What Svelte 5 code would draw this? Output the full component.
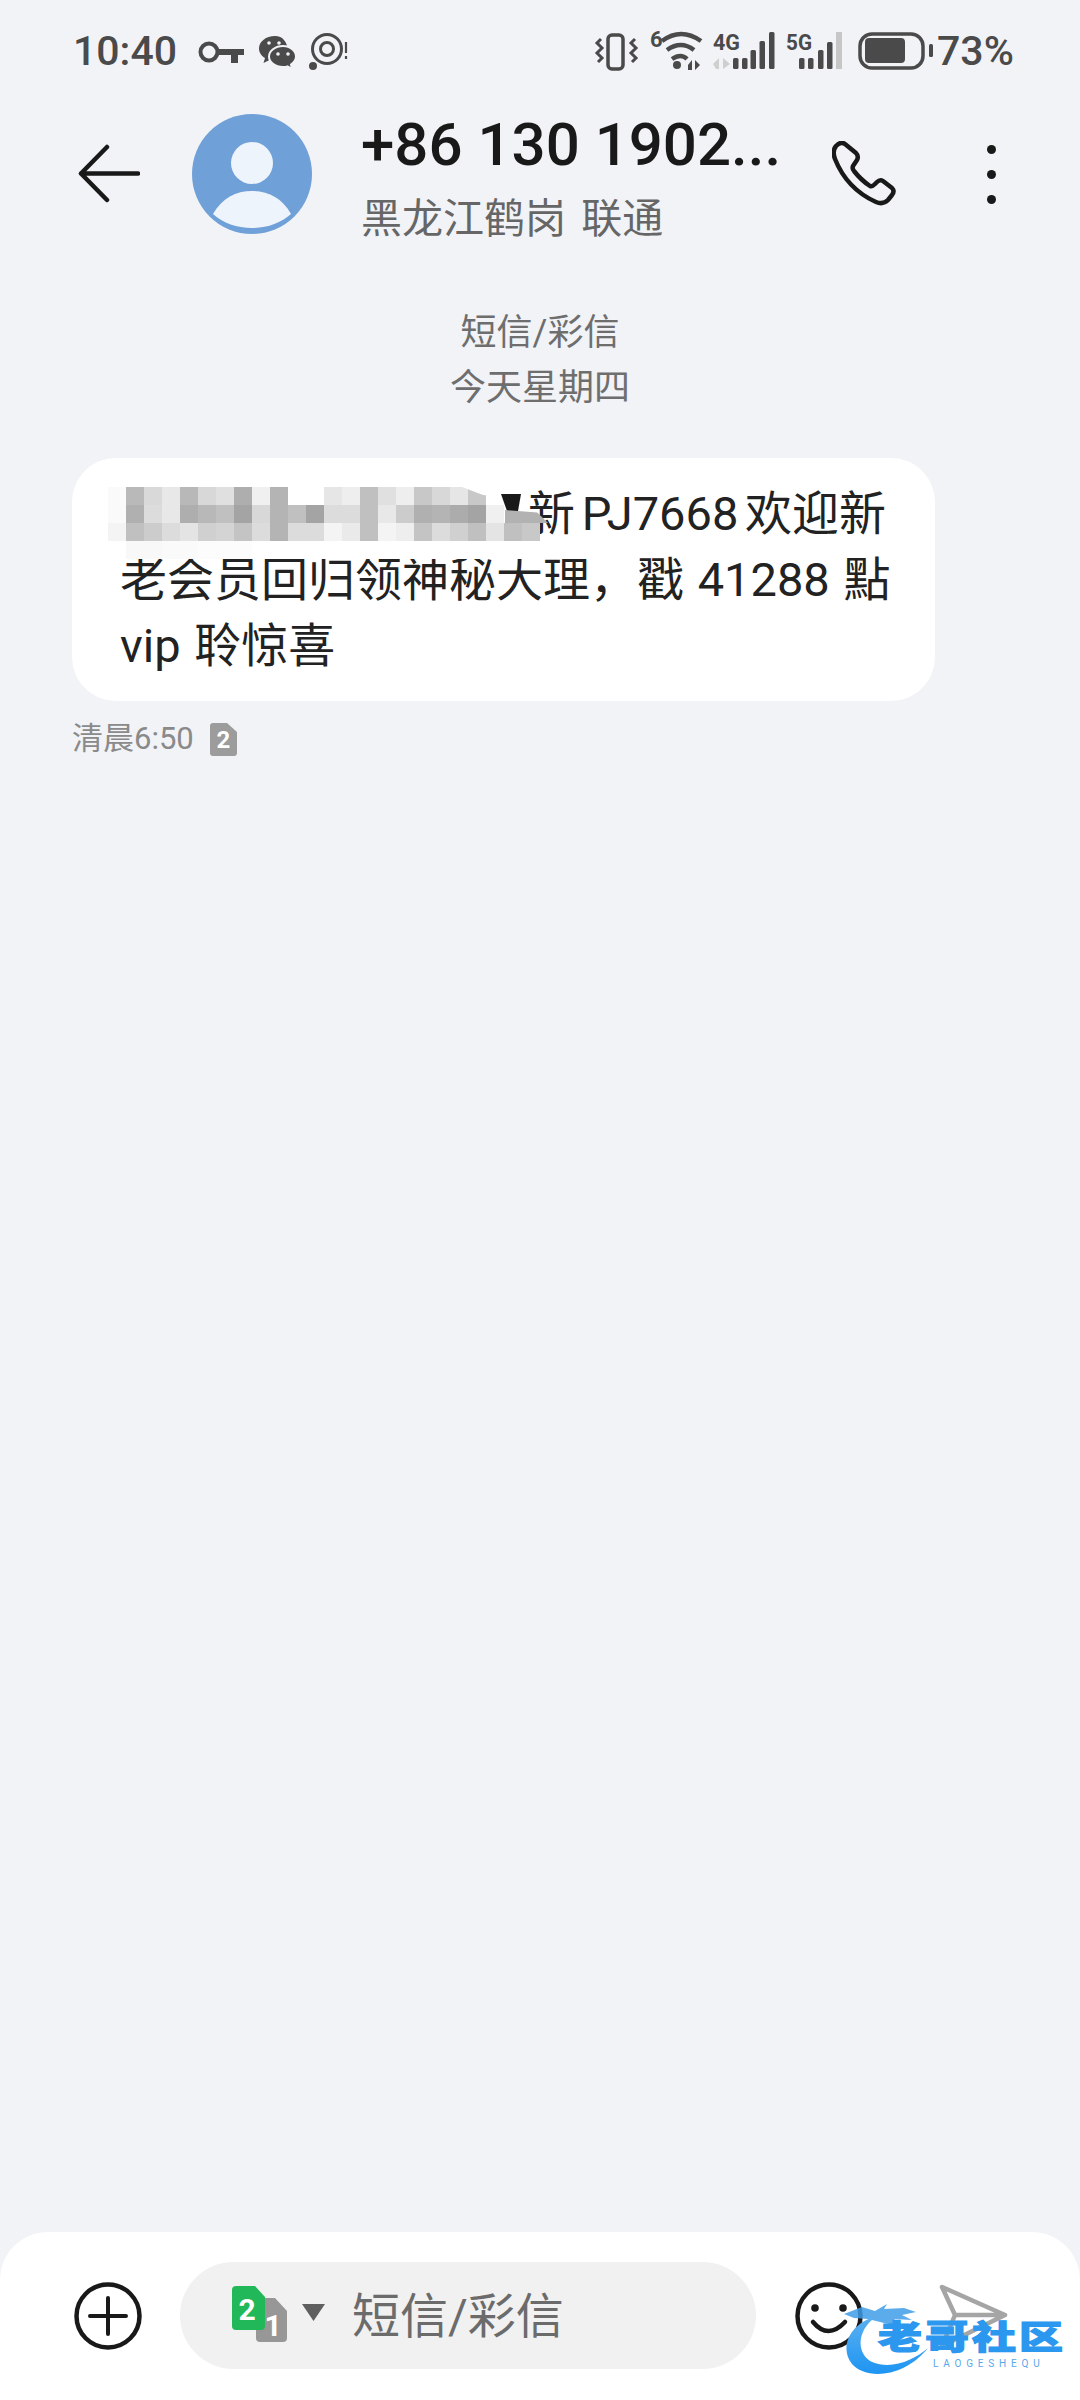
<script>
  const rows = [
    ['fafafa','b9b9b9','d9d9d9','e8e8e8','b8b8b8','d8d8d8','e0e0e0','aeaeae','f0f0f0','b4b4b4','ffffff','ffffff','e6e6e6','eeeeee','c0c0c0','e0e0e0','eeeeee','c8c8c8','d8d8d8','e6e6e6','c8c8c8','ffffff','ffffff','ffffff'],
    ['fafafa','b0b0b0','dcdcdc','e8e8e8','aeaeae','b8b8b8','c0c0c0','a4a4a4','d8d8d8','b4b4b4','c0c0c0','a4a4a4','dcdcdc','dcdcdc','c0c0c0','e8e8e8','cccccc','b0b0b0','b4b4b4','acacac','a4a4a4','f0f0f0','ffffff','ffffff'],
    ['f4f4f4','c0c0c0','cccccc','dcdcdc','e4e4e4','d0d0d0','d4d4d4','c4c4c4','dcdcdc','b4b4b4','dcdcdc','dcdcdc','f4f4f4','eaeaea','c0c0c0','f4f4f4','eeeeee','c4c4c4','dcdcdc','d0d0d0','c0c0c0','e4e4e4','c0c0c0','c8c8c8'],
    ['ffffff','f8f8f8','f8f8f8','fafafa','fafafa','fcfcfc','fcfcfc','fcfcfc','ffffff','ffffff','ffffff','ffffff','ffffff','ffffff','ffffff','ffffff','ffffff','ffffff','ffffff','ffffff','ffffff','ffffff','ffffff','ffffff']
  ];
  const cells = rows.flat();
</script>

<div class="page">
  <div class="status">
    <span class="clock">10:40</span>
    <svg class="st-left" viewBox="195 28 160 46" aria-hidden="true">
      <circle cx="210" cy="52" r="8.5" fill="none" stroke="#4a4a4a" stroke-width="4"/>
      <path d="M218 49h27v6h-6v8h-7v-8h-14z" fill="#4a4a4a"/>
      <path d="M276 36c-9 0-16 5.500-16 12.500 0 4 2.500 7.500 6 9.500l-1.500 5 6-3c2 .5 3.500 .5 5.500 .5 9 0 10-5 13-12-2-7-5-12.500-13-12.500z" fill="#4a4a4a"/>
      <path d="M284 46c-8 0-14 5-14 10.500S276 67 284 67c1.500 0 3-.2 4.500-.6l4.500 2.600-1-4.500c3-2 5-5 5-8 0-5.500-5.500-10.500-13-10.500z" fill="#4a4a4a" stroke="#f1f3f7" stroke-width="2"/>
      <circle cx="270" cy="43" r="1.800" fill="#f1f3f7"/><circle cx="280" cy="43" r="1.800" fill="#f1f3f7"/>
      <circle cx="279" cy="54" r="1.800" fill="#f1f3f7"/><circle cx="289" cy="54" r="1.800" fill="#f1f3f7"/>
      <circle cx="328" cy="49" r="14.500" fill="none" stroke="#4a4a4a" stroke-width="3"/>
      <circle cx="328" cy="49" r="6.500" fill="none" stroke="#4a4a4a" stroke-width="3"/>
      <circle cx="314" cy="66" r="4" fill="#4a4a4a"/>
      <path d="M347 42v11M347 56v3" stroke="#4a4a4a" stroke-width="2.200" fill="none"/>
    </svg>
    <svg class="st-right" viewBox="590 28 345 46" aria-hidden="true">
      <rect x="609" y="35" width="15" height="34" rx="4" fill="none" stroke="#4a4a4a" stroke-width="3.500"/>
      <path d="M602 39l-4 4 5 5-5 5 5 5-4 4M636 39l-4 4 5 5-5 5 5 5-4 4" fill="none" stroke="#4a4a4a" stroke-width="3"/>
      <text x="651" y="47" class="net">6</text>
      <path d="M663 41q19-14 39 0M668 50q14-10 27 0M673 59q9-6 15 0" fill="none" stroke="#4a4a4a" stroke-width="4.500"/>
      <circle cx="678" cy="65" r="4" fill="#4a4a4a"/>
      <path d="M689 65l4-5v10h-4zM696 60v10l5-5z" fill="#4a4a4a"/>
      <text x="714" y="50" class="net" textLength="27" lengthAdjust="spacingAndGlyphs">4G</text>
      <path d="M714 64l6-6v11h-3zM724 58v11l7-5z" fill="#cfcfcf"/>
      <g fill="#4a4a4a">
        <rect x="734" y="58" width="5.500" height="11" rx="1.500"/>
        <rect x="743" y="58" width="5.500" height="11" rx="1.500"/>
        <rect x="751.500" y="50" width="5.500" height="19" rx="1.500"/>
        <rect x="760.500" y="41" width="5.500" height="28" rx="1.500"/>
        <rect x="770" y="32" width="5.500" height="37" rx="1.500"/>
      </g>
      <text x="787" y="50" class="net" textLength="26" lengthAdjust="spacingAndGlyphs">5G</text>
      <g fill="#4a4a4a">
        <rect x="800" y="58" width="5.500" height="11" rx="1.500"/>
        <rect x="809" y="58" width="5.500" height="11" rx="1.500"/>
        <rect x="819" y="50" width="5.500" height="19" rx="1.500"/>
        <rect x="828" y="42" width="5.500" height="27" rx="1.500"/>
      </g>
      <rect x="837" y="32" width="6" height="37" fill="#c6c6c6"/>
      <rect x="861" y="34" width="63" height="34" rx="12" fill="none" stroke="#4a4a4a" stroke-width="3.500"/>
      <rect x="866" y="38" width="40" height="25" rx="4" fill="#4a4a4a"/>
      <rect x="930" y="44" width="4" height="13" rx="1.500" fill="#4a4a4a"/>
    </svg>
    <span class="pct">73%</span>
  </div>

  <header class="head">
    <svg class="back" viewBox="0 0 62 60" aria-hidden="true">
      <path d="M29 3L3 29.500 29 56M3 29.500h57" fill="none" stroke="#191919" stroke-width="4.500" stroke-linecap="round" stroke-linejoin="round"/>
    </svg>
    <svg class="avatar" viewBox="0 0 120 120" aria-hidden="true">
      <circle cx="60" cy="60" r="60" fill="#70a0d8"/>
      <circle cx="60" cy="49" r="21" fill="#eef4fb"/>
      <path d="M21 100C30 84 44 77 60 77s30 7 39 23c-10 9-24 14-39 14s-29-5-39-14z" fill="#eef4fb"/>
    </svg>
    <div class="who">
      <div class="name">+86 130 1902...</div>
      <div class="place">黑龙江鹤岗 联通</div>
    </div>
    <svg class="phone" viewBox="0 0 66 66" aria-hidden="true">
      <path d="M4 5Q9 0 13 3L24 12Q27 15 25 19L21 25Q20 28 22 30Q29 39 38 45Q40 46 43 43L45 41Q48 38 51 40L60 47Q63 50 60 54L56 59Q51 64 44 61Q15 48 3 18Q0 10 4 5Z" fill="none" stroke="#191919" stroke-width="4.500" stroke-linejoin="round"/>
    </svg>
    <div class="more"><i></i><i></i><i></i></div>
  </header>

  <div class="date">
    <div>短信/彩信</div>
    <div>今天星期四</div>
  </div>

  <div class="bubble">
    <div class="line first">新 PJ7668 欢迎新</div>
    <div class="line">老会员回归领神秘大理，戳 41288 點</div>
    <div class="line">vip 聆惊喜</div>
    <div class="mosaic" aria-hidden="true">
      {#each cells as c}<span style="background:#{c}"></span>{/each}
    </div>
    <div class="mark"></div>
    <div class="wedge"></div>
  </div>

  <div class="meta">
    <span>清晨6:50</span>
    <svg class="simbadge" viewBox="0 0 27 33" aria-hidden="true">
      <path d="M3 0h14l10 9v21a3 3 0 0 1-3 3H3a3 3 0 0 1-3-3V3a3 3 0 0 1 3-3z" fill="#9c9c9c"/>
      <text x="13.500" y="25" class="simnum small">2</text>
    </svg>
  </div>

  <div class="spacer"></div>

  <footer class="foot">
    <svg class="plus" viewBox="0 0 68 68" aria-hidden="true">
      <circle cx="34" cy="34" r="31.500" fill="none" stroke="#191919" stroke-width="4.500"/>
      <path d="M16 34h36M34 16v36" stroke="#191919" stroke-width="4" stroke-linecap="round"/>
    </svg>
    <div class="field">
      <svg class="sims" viewBox="0 0 62 56" aria-hidden="true">
        <path d="M27 12h16l12 13v27a4 4 0 0 1-4 4H28a4 4 0 0 1-4-4V15a3 3 0 0 1 3-3z" fill="#979797"/>
        <text x="41" y="50" class="simnum">1</text>
        <path d="M4 0h19l10 11v29a4 4 0 0 1-4 4H4a4 4 0 0 1-4-4V4a4 4 0 0 1 4-4z" fill="#20b858"/>
        <text x="15" y="34" class="simnum">2</text>
      </svg>
      <svg class="caret" viewBox="0 0 23 17" aria-hidden="true"><path d="M0 0h23L11.500 17z" fill="#5f5f5f"/></svg>
      <span class="ph">短信/彩信</span>
    </div>
    <svg class="smile" viewBox="0 0 68 68" aria-hidden="true">
      <circle cx="34" cy="34" r="31.500" fill="none" stroke="#191919" stroke-width="4.500"/>
      <circle cx="20" cy="26" r="3.800" fill="#191919"/><circle cx="48" cy="26" r="3.800" fill="#191919"/>
      <path d="M18 40Q33 58 50 40" fill="none" stroke="#191919" stroke-width="4.500" stroke-linecap="round"/>
    </svg>
    <svg class="send" viewBox="0 0 70 66" aria-hidden="true">
      <path d="M3 3L66 31 3 62 16 31zM16 31H66" fill="none" stroke="#a5a5a5" stroke-width="4.500" stroke-linejoin="round"/>
    </svg>
    <div class="wm" aria-hidden="true">
      <svg class="dragon" viewBox="0 0 100 76">
        <defs><linearGradient id="dg" x1="0" y1="0" x2="0" y2="1"><stop offset="0" stop-color="#5cb0f0"/><stop offset="1" stop-color="#1e95f2"/></linearGradient></defs>
        <path d="M2 12L20 5 33 9 45 2 42 7 62 6 74 10 60 13 70 18 52 17 58 24 42 21 26 17 12 16z" fill="#3f9ce6" opacity=".85"/>
        <path d="M35 14C10 20-4 44 10 62 24 78 62 76 86 46 72 58 50 68 30 60 14 52 14 28 35 14z" fill="url(#dg)"/>
      </svg>
      <div class="wm-cn">老哥社区</div>
      <div class="wm-en">LAOGESHEQU</div>
    </div>
  </footer>
</div>

<style>
  :global(body) { margin: 0; background: #f1f3f7; }
  .page {
    width: 1080px; height: 2400px; display: flex; flex-direction: column;
    background: #f1f3f7; overflow: hidden;
    font-family: Roboto, "Noto Sans CJK SC", sans-serif; color: #191919;
  }
  .status { height: 114px; box-sizing: border-box; padding: 28px 0 0 73px; display: flex; align-items: flex-start; color: #4a4a4a; }
  .clock, .pct { font-size: 41px; font-weight: 500; line-height: 46px; }
  .st-left { width: 160px; height: 46px; margin-left: 17px; flex: none; }
  .st-right { width: 345px; height: 46px; margin-left: 235px; flex: none; }
  .pct { margin-left: 3px; }
  .net { font: 700 22px Roboto, sans-serif; fill: #4a4a4a; }
  .head { height: 120px; display: flex; align-items: center; }
  .back { width: 62px; height: 60px; margin-left: 78px; flex: none; }
  .avatar { width: 120px; height: 120px; margin-left: 52px; flex: none; }
  .who { width: 471px; margin: 17px 0 0 49px; flex: none; }
  .name { font-size: 60px; font-weight: 500; line-height: 66px; white-space: nowrap; margin-top: -10px; }
  .place { font-size: 41px; line-height: 50px; margin-top: 16px; color: #666; white-space: nowrap; word-spacing: 5px; }
  .phone { width: 66px; height: 66px; flex: none; }
  .more { display: flex; flex-direction: column; gap: 16px; margin-left: 89px; }
  .more i { display: block; width: 9px; height: 9px; border-radius: 50%; background: #191919; }
  .date { margin-top: 72px; text-align: center; font-size: 36px; line-height: 55px; color: #6e6e6e; }
  .bubble {
    position: relative; margin: 42px 0 0 72px; width: 863px; height: 243px; box-sizing: border-box;
    padding: 23px 0 0 48px; background: #fff; border-radius: 44px; color: #222;
  }
  .line { font-size: 47px; line-height: 66px; white-space: nowrap; word-spacing: 2px; }
  .first { padding-left: 408px; word-spacing: -5px; }
  .mosaic {
    position: absolute; left: 36px; top: 29px; display: grid;
    grid-template-columns: repeat(24, 18px); grid-auto-rows: 18px;
    clip-path: polygon(0 0, 354px 0, 375px 8px, 396px 10px, 396px 36px, 432px 36px, 432px 72px, 0 72px);
  }
  .mark { position: absolute; left: 429px; top: 36px; width: 20px; height: 17px; background: #191919; clip-path: polygon(0 0, 100% 0, 85% 100%, 30% 100%); }
  .wedge { position: absolute; left: 433px; top: 52px; width: 43px; height: 13px; background: #b2b2b2; clip-path: polygon(0 0, 75% 20%, 100% 100%, 0 100%); }
  .meta { margin: 20px 0 0 72px; display: flex; align-items: center; gap: 16px; font-size: 31px; line-height: 36px; color: #8a8a8a; }
  .simbadge { width: 27px; height: 33px; }
  .simnum { font: 700 30px Roboto, sans-serif; fill: #fff; text-anchor: middle; }
  .small { font-size: 24px; }
  .spacer { flex: 1; }
  .foot {
    position: relative; height: 168px; box-sizing: border-box; padding: 30px 0 0 74px;
    background: #fff; border-radius: 48px 48px 0 0; display: flex; align-items: flex-start;
  }
  .plus { width: 68px; height: 68px; margin-top: 20px; flex: none; }
  .field {
    width: 576px; height: 107px; margin-left: 38px; flex: none; background: #f1f1f2; border-radius: 54px;
    display: flex; align-items: center; box-sizing: border-box; padding-left: 52px;
  }
  .sims { width: 62px; height: 56px; flex: none; margin-top: -4px; }
  .caret { width: 23px; height: 17px; margin-left: 8px; flex: none; margin-top: -6px; }
  .ph { font-size: 48px; line-height: 60px; color: #6b6b6b; margin: 2px 0 0 27px; }
  .smile { width: 68px; height: 68px; margin: 20px 0 0 39px; flex: none; }
  .send { width: 70px; height: 66px; margin: 22px 0 0 76px; flex: none; }
  .wm { position: absolute; left: 842px; top: 70px; width: 230px; height: 76px; }
  .dragon { position: absolute; left: 0; top: 0; width: 100px; height: 76px; }
  .wm-cn {
    position: absolute; left: 36px; top: 20px; font-size: 44px; line-height: 44px; font-weight: 900; letter-spacing: 3px;
    color: #2b97ee; white-space: nowrap; transform: scaleY(.74); transform-origin: top left; -webkit-text-stroke: 1.500px #2b97ee;
  }
  .wm-en { position: absolute; left: 91px; top: 56px; font-size: 10px; line-height: 12px; letter-spacing: 4.800px; color: #5aa8ea; white-space: nowrap; }
</style>
